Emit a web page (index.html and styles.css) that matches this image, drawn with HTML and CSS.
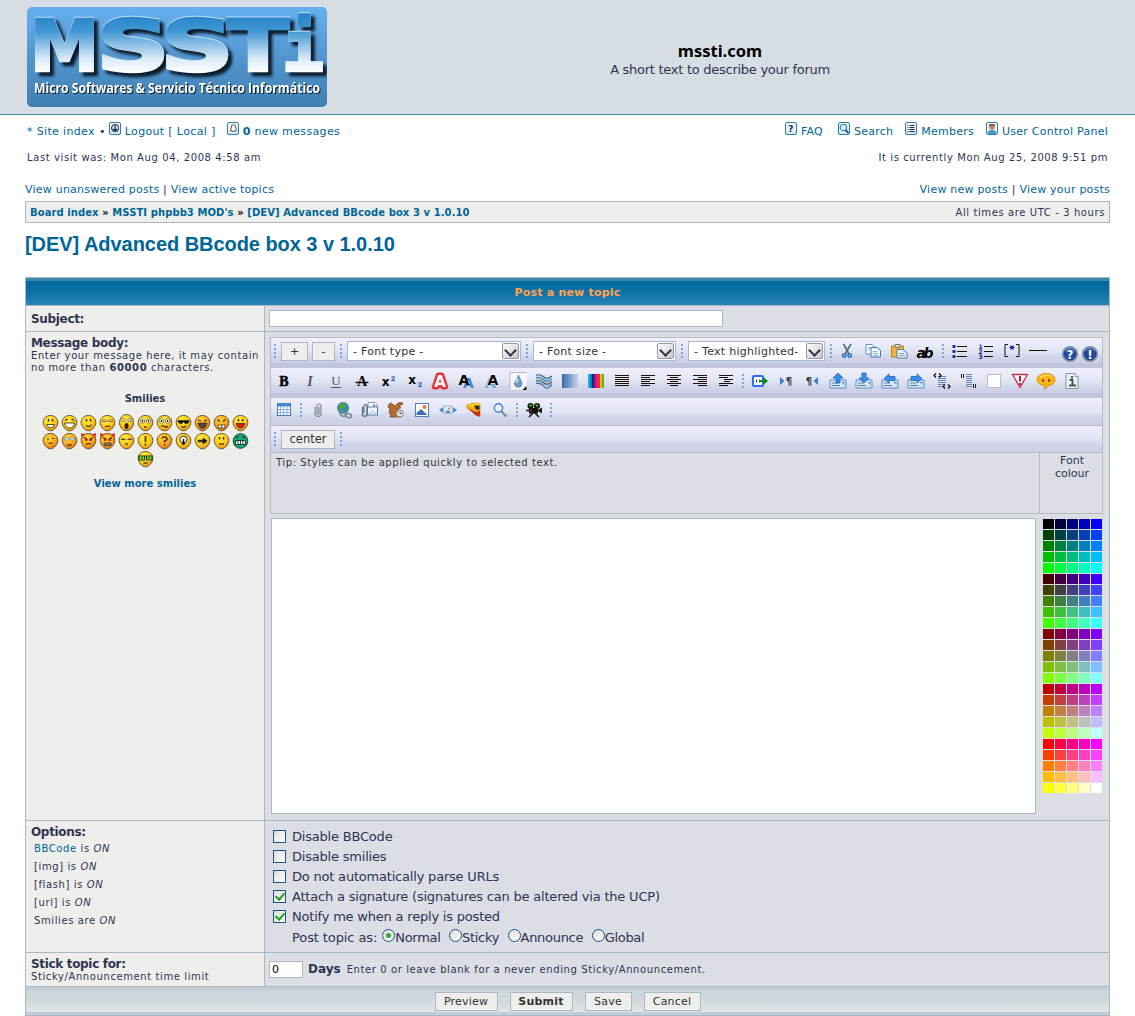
FILE: index.html
```html
<!DOCTYPE html>
<html lang="en">
<head>
<meta charset="utf-8">
<title>mssti.com - Post a new topic</title>
<link rel="stylesheet" href="styles.css">
</head>
<body>
<svg class="defs" width="0" height="0" aria-hidden="true">
  <defs>
    <linearGradient id="gLogo" x1="0" y1="0" x2="0" y2="1"><stop offset="0" stop-color="#66aeee"/><stop offset="1" stop-color="#3f7fb2"/></linearGradient>
    <linearGradient id="gChrome" gradientUnits="userSpaceOnUse" x1="0" y1="10" x2="0" y2="66"><stop offset="0" stop-color="#2a86c8"/><stop offset=".25" stop-color="#3f96d4"/><stop offset=".75" stop-color="#dcebf8"/><stop offset="1" stop-color="#fff"/></linearGradient>
    <radialGradient id="gFace" cx=".4" cy=".3" r=".75"><stop offset="0" stop-color="#fff040"/><stop offset=".6" stop-color="#fdc81c"/><stop offset="1" stop-color="#d98a10"/></radialGradient>
    <radialGradient id="gHot" cx=".4" cy=".3" r=".75"><stop offset="0" stop-color="#ffd83c"/><stop offset=".6" stop-color="#fca61c"/><stop offset="1" stop-color="#cc7010"/></radialGradient>
    <linearGradient id="gBlueFade"><stop offset="0" stop-color="#3a5fb0"/><stop offset=".6" stop-color="#8fb4d4"/><stop offset="1" stop-color="#c8cbe4"/></linearGradient>
    <linearGradient id="gNav" x1="0" y1="0" x2="0" y2="1"><stop offset="0" stop-color="#fff"/><stop offset="1" stop-color="#d2e2ee"/></linearGradient>
  </defs>

  <symbol id="n-box" viewBox="0 0 12 13"><rect x=".5" y=".5" width="11" height="12" rx="1.5" fill="url(#gNav)" stroke="#2f7fa8"/></symbol>
  <symbol id="n-out" viewBox="0 0 12 13"><use href="#n-box"/><circle cx="6" cy="6" r="3.4" fill="none" stroke="#2a4468" stroke-width="1.2"/><path d="M6 3.5v5M4.3 6.8L6 9l1.7-2.2" stroke="#16325c" stroke-width="1.3" fill="none"/></symbol>
  <symbol id="n-pm" viewBox="0 0 12 13"><use href="#n-box"/><path d="M5 3h3l1.500 5-2 1.500-4-1z" fill="#fff" stroke="#666" stroke-width="1.1"/></symbol>
  <symbol id="n-find" viewBox="0 0 12 13"><use href="#n-box"/><circle cx="5.4" cy="5.4" r="3.2" fill="#d8f0ff" stroke="#2a80b4" stroke-width="1.1"/><path d="M7.6 8l2.8 3" stroke="#123a6e" stroke-width="1.8"/></symbol>
  <symbol id="n-list" viewBox="0 0 12 13"><use href="#n-box"/><path d="M2.5 3.5h1m1 0h5M2.5 5.5h1m1 0h5M2.5 7.5h1m1 0h5M2.5 9.5h1m1 0h5" stroke="#222c44"/></symbol>
  <symbol id="n-user" viewBox="0 0 12 13"><use href="#n-box"/><path d="M2 12V9.5L4.5 8h3L10 9.5V12z" fill="#4a9ad0"/><circle cx="6" cy="5" r="2.7" fill="#c8805a"/><path d="M3.2 5V2.2h5.6V5L8 3.6H4z" fill="#5a3826"/></symbol>

  <symbol id="drop" viewBox="-13 -12 26 24"><path d="M-8-8.500H8.500V8.500H-8z" fill="#f6f6fc"/><path d="M-8 8.500V-8.500H8.500" fill="none" stroke="#b8b8b8"/><path d="M.5-6C1-3 4-.5 4 3A3.800 3.800 0 0 1-3.500 3C-3.500 0 0-2 .5-6z" fill="#6a9cc8" stroke="#4a78a4" stroke-width=".8"/><path d="M-1.500 2q0-2 1.500-4" stroke="#e4f4ff" stroke-width="1.400" fill="none"/><path d="M8.500 5v4h-4z" fill="#111"/></symbol>
  <symbol id="waves" viewBox="-13 -12 26 24"><path d="M-8-6q5-1 8 2t8-1v8q-4 4-8 2t-8-3z" fill="#a8cfe4"/><g fill="none" stroke-width="1.200"><path d="M-8-6q5-1 8 2t8-1" stroke="#3a6a88"/><path d="M-8-3q5-1 8 2t8-1" stroke="#2f8fc4"/><path d="M-8 0q5-1 8 2t8-1" stroke="#556"/><path d="M-8 2.500q5-1 8 3t8-2" stroke="#2a7cc0"/><path d="M-2-5q-3 4 1 9M4-2l-1 7" stroke="#e08858" stroke-width=".8"/></g></symbol>
  <symbol id="fade" viewBox="-13 -12 26 24"><path d="M-8-7H8V7H-8z" fill="url(#gBlueFade)"/><path d="M-5.500-7V7M-2.500-7V7M.5-7V7" stroke="#5c88b8" opacity=".6"/></symbol>
  <symbol id="rainbow" viewBox="-13 -12 26 24"><g stroke-width="2"><path d="M-7-7V7" stroke="#18b0e0"/><path d="M-5-7V7" stroke="#0a7cb0"/><path d="M-3-7V7" stroke="#282078"/><path d="M-1-7V7" stroke="#9c1888"/><path d="M1-7V7" stroke="#e8148c"/><path d="M3-7V7" stroke="#f03028"/><path d="M5-7V7" stroke="#f8b818"/><path d="M7-7V7" stroke="#60b020"/></g></symbol>
  <symbol id="just" viewBox="-13 -12 26 24"><path class="ln" d="M-7-5.500H7M-7-3.500H7M-7-1.500H7M-7 .5H7M-7 2.500H7M-7 4.500H7"/></symbol>
  <symbol id="left" viewBox="-13 -12 26 24"><path class="ln" d="M-7-5.500H7M-7-3.500H2M-7-1.500H7M-7 .5H2M-7 2.500H7M-7 4.500H2"/></symbol>
  <symbol id="mid" viewBox="-13 -12 26 24"><path class="ln" d="M-7-5.500H7M-4-3.500H4M-7-1.500H7M-4 .5H4M-7 2.500H7M-4 4.500H4"/></symbol>
  <symbol id="right" viewBox="-13 -12 26 24"><path class="ln" d="M-7-5.500H7M-2-3.500H7M-7-1.500H7M-2 .5H7M-7 2.500H7M-2 4.500H7"/></symbol>
  <symbol id="indent" viewBox="-13 -12 26 24"><path class="ln" d="M-7-5.500H7M-7-3.500H2M-2-1.500H7M-2 .5H4M-7 2.500H7M-7 4.500H2"/></symbol>
  <symbol id="export" viewBox="-13 -12 26 24"><rect x="-7" y="-5" width="10" height="10" rx="1" fill="#fff" stroke="#2f6ef0" stroke-width="2"/><path d="M-3.500-1.500v3M-.5-1.500v3" stroke="#333"/><path d="M-1 0h6" stroke="#0a8a10" stroke-width="2"/><path d="M4-3.500L8 0 4 3.500z" fill="#0a8a10"/></symbol>
  <symbol id="card" viewBox="-13 -12 26 24"><path d="M-8-1H8V7H-8z" fill="#d4e8fa" stroke="#5a8cc0"/><path d="M-6 2H0M-6 4.500H2M4 1.500h2v2" stroke="#5a7c9c" fill="none"/></symbol>
  <symbol id="m-up" viewBox="-13 -12 26 24"><use href="#card" x="-13" y="-12" width="26" height="24"/><path d="M0-8L5-3H2V2h-4V-3h-3z" fill="#3a8cf0" stroke="#1c58b0" stroke-width=".7"/></symbol>
  <symbol id="m-down" viewBox="-13 -12 26 24"><use href="#card" x="-13" y="-12" width="26" height="24"/><path d="M0 2L5-3H2V-8h-4V-3h-3z" fill="#3a8cf0" stroke="#1c58b0" stroke-width=".7"/></symbol>
  <symbol id="m-left" viewBox="-13 -12 26 24"><use href="#card" x="-13" y="-12" width="26" height="24"/><path d="M-6-2.500L-1-7v2.500h6v4h-6V2z" fill="#3a8cf0" stroke="#1c58b0" stroke-width=".7"/></symbol>
  <symbol id="m-right" viewBox="-13 -12 26 24"><use href="#card" x="-13" y="-12" width="26" height="24"/><path d="M6-2.500L1-7v2.500h-6v4h6V2z" fill="#3a8cf0" stroke="#1c58b0" stroke-width=".7"/></symbol>
  <symbol id="code" viewBox="-13 -12 26 24"><path d="M-4-4.500H4M-4-2.500H4M-4-.5H4M-4 1.500H4M-4 3.500H2M-4 5.500H0" stroke="#6c84b4"/><path d="M-6-7.500L-8-5.500-6-3.500M-3-7.500l2 2-2 2M3 3.500L1 5.500 3 7.500M6 3.500L8 5.500 6 7.500" fill="none" stroke="#000" stroke-width="1.100"/></symbol>
  <symbol id="quote" viewBox="-13 -12 26 24"><path d="M-2-6.500H4M-2-4.500H4M-2-2.500H4M-2-.5H4M-2 1.500H4M-2 3.500H4M-2 5.500H4" stroke="#6c84b4"/><path d="M-6.500-7v4M-4.500-7v4M5.500 3v4M7.500 3v4" stroke="#222"/></symbol>
  <symbol id="blank" viewBox="-13 -12 26 24"><rect x="-6.500" y="-6.500" width="13" height="13" fill="#fff" stroke="#bcbcbc"/></symbol>
  <symbol id="warn" viewBox="-13 -12 26 24"><path d="M-7.500-6.500h15L0 6.500z" fill="#fff" stroke="#c83048" stroke-width="1.400" stroke-linejoin="round"/><path d="M0-5V.5M0 2v2" stroke="#c81830" stroke-width="2"/></symbol>
  <symbol id="talk" viewBox="-13 -12 26 24"><path d="M0-7.500c5 0 9 2 9 6S6 4 3 4.500L-1.500 8.500V4.500C-6 4-9 2-9-1.500S-5-7.500 0-7.500z" fill="#fcb414" stroke="#d08810" stroke-width=".8"/><path d="M-6-4q5-3 11-1" stroke="#ffe068" stroke-width="1.500" fill="none"/><path d="M-5-.5L-2-2.500v4zM-2-.5h1M5-.5L2-2.500v4z" fill="#884400"/></symbol>
  <symbol id="info" viewBox="-13 -12 26 24"><path d="M-6-7.500h9l3 3V7.500H-6z" fill="#eef1f4" stroke="#8a949e"/><path d="M3-7.500v3h3" fill="#fff" stroke="#8a949e"/><path d="M0-5v2.500M-2.500-1H.5V4M-3 4.500H4" stroke="#44546a" stroke-width="2" fill="none"/></symbol>

  <symbol id="cut" viewBox="-13 -12 26 24"><path d="M-3.500-7L2 3M4-7L-2 3" stroke="#5c6c80" stroke-width="1.700"/><circle cx="-2.700" cy="4.500" r="1.700" fill="none" stroke="#2a6cb0" stroke-width="1.500"/><circle cx="2.700" cy="4.500" r="1.700" fill="none" stroke="#2a6cb0" stroke-width="1.500"/></symbol>
  <symbol id="copy" viewBox="-13 -12 26 24"><path d="M-7-6.500h6l3 3v6.500h-9z" fill="#fff" stroke="#5a90d0"/><path d="M-2-3.500h6l3.500 3v6.500H-2z" fill="#eef6ff" stroke="#3a78c4"/><path d="M-5-3.500h3M-5-1.500h2M0 .5h4M0 2.500h5M0 4.500h5" stroke="#88b0dc"/></symbol>
  <symbol id="paste" viewBox="-13 -12 26 24"><path d="M-7.500-5h12V6h-12z" fill="#f0b440" stroke="#b8801c"/><path d="M-4-6.500h5v3h-5z" fill="#e0e0e0" stroke="#777"/><path d="M-2-1.500h6L8 2v5H-2z" fill="#e8f2fc" stroke="#5c7c9c"/><path d="M0 2.500h5M0 4.500h6" stroke="#7c9cc0"/></symbol>
  <symbol id="ul" viewBox="-13 -12 26 24"><path class="ln" d="M-3-4.500H7M-3 .5H7M-3 5.500H7"/><path d="M-7.500-4.500h3M-7.500 .5h3M-7.500 5.500h3" stroke="#101080" stroke-width="2.400"/></symbol>
  <symbol id="star" viewBox="-13 -12 26 24"><path d="M-4-6.500h-3V5.500h3M4-6.500h3V5.500H4" fill="none" stroke="#111"/><path d="M-2.500-3.500h5M-1.500-5.500l3 4M1.500-5.500l-3 4" stroke="#1818a0" stroke-width="1.200"/></symbol>
  <symbol id="hr" viewBox="-13 -12 26 24"><path class="ln" d="M-9-.5H9"/></symbol>

  <symbol id="table" viewBox="-13 -12 26 24"><rect x="-6.500" y="-6.500" width="13" height="12" fill="#fff" stroke="#4a7cc0"/><path d="M-6-5H6" stroke="#4a88d8" stroke-width="3"/><path d="M-6-.5H6M-6 2.500H6M-3.500-4V5M-.5-4V5M3-4V5" stroke="#8ab0dc"/></symbol>
  <symbol id="clip" viewBox="-13 -12 26 24"><path d="M-3-3V3.500a3 3 0 0 0 6 0V-4a2 2 0 0 0-4 0V3a1 1 0 0 0 2 0V-3" fill="none" stroke="#7c8894" stroke-width="1.200"/></symbol>
  <symbol id="globe" viewBox="-13 -12 26 24"><circle cx="-1" cy="-2" r="6" fill="#3a80d0"/><path d="M-5-5l4-2.500 3 2-1 3-3 1-1 3-3-2zM2-1l3-2v3l-2 2z" fill="#48a838"/><g fill="none" stroke="#7a8894" stroke-width="1.500"><ellipse cx="-1" cy="4" rx="3.200" ry="2" transform="rotate(15 -1 4)"/><ellipse cx="4.500" cy="5.500" rx="3.200" ry="2" transform="rotate(15 4 5)"/></g></symbol>
  <symbol id="mail" viewBox="-13 -12 26 24"><path d="M-2-3V-7.500H5l2 2v3" fill="#f4f8fc" stroke="#7c9cc0"/><rect x="-2.500" y="-3" width="10" height="8" fill="#eef4fc" stroke="#5080b8"/><path d="M-2 5l4.500-4L7 5" fill="none" stroke="#9ab4d4"/><path d="M4-5.500v2" stroke="#e04830" stroke-width="2"/><path d="M-7.500-3V4a2 2 0 0 0 4.500 0V-4a1.500 1.500 0 0 0-3 0V3" fill="none" stroke="#56687c" stroke-width="1.200"/></symbol>
  <symbol id="squirrel" viewBox="-13 -12 26 24"><path d="M-7-6l2-1 2 1.500L-1-4l3-3 4-.5 1 1.500-4 2 2 1.500-3 1.500 1 5 2 3H-6l1-2-2-2 1-4-2-2z" fill="#b06a30" stroke="#70401c" stroke-width=".7"/><circle cx="4" cy="3.500" r="3.500" fill="#dce4ea" stroke="#8a8a8a"/><path d="M4 1.500v2h2" stroke="#555" fill="none"/></symbol>
  <symbol id="image" viewBox="-13 -12 26 24"><rect x="-6.500" y="-6.500" width="13" height="13" fill="#fff" stroke="#5080c0"/><path d="M-5.500 5V3l4.500-4 6.500 6z" fill="#3c70b8"/><circle cx="2.500" cy="-3" r="2" fill="#e87838"/></symbol>
  <symbol id="slides" viewBox="-13 -12 26 24"><rect x="-4" y="-4" width="8" height="8" fill="#dce8f4" stroke="#a8b8c8"/><path d="M-3 3l3-3 3 3z" fill="#4a80bc"/><circle cx="1" cy="-1.500" r="1" fill="#d87848"/><path d="M-5-3v6l-4-3zM5-3v6l4-3z" fill="#5088d0"/></symbol>
  <symbol id="bird" viewBox="-13 -12 26 24"><path d="M-7-5Q0-8 6-6.500V6.500Q1 6-1 2L-7-2z" fill="#f4a818" stroke="#b87c14" stroke-width=".7"/><path d="M-7-5q4 3 13 2v-3.500q-7-1-13 1.500z" fill="#ffd028"/><path d="M0-4.500h5.500v4H2z" fill="#2c2416"/><path d="M-6-1.500L2 2l4-1.500V6.500Q1 6-2 2z" fill="#c03818"/></symbol>
  <symbol id="loupe" viewBox="-13 -12 26 24"><circle cx="-1.500" cy="-2" r="4.200" fill="#e4f2fc" stroke="#4a84cc" stroke-width="1.400"/><path d="M1.500 1.500l5 5" stroke="#7a8a9c" stroke-width="2"/></symbol>
  <symbol id="camera" viewBox="-13 -12 26 24"><circle cx="-3.500" cy="-4" r="3" fill="#111"/><circle cx="3" cy="-4" r="3" fill="#111"/><circle cx="-3.500" cy="-4.500" r="1.200" fill="#28d820"/><circle cx="3" cy="-4.500" r="1.200" fill="#28d820"/><path d="M-5-2H4V3.500h-9zM4 0l4-2.500v6L4 1z" fill="#111"/><path d="M-1 3l-4 4M1 3l4 4M-8 .5h4" stroke="#111" stroke-width="1.500"/><path d="M-4 .5h2" stroke="#d02020" stroke-width="1.500"/></symbol>

  <symbol id="face" viewBox="0 0 19 18"><path d="M9.500 1.500C13.800 1.500 16.800 4.500 16.800 8.300S13.300 16.800 9.500 16.800 2.200 12.200 2.200 8.300 5.200 1.500 9.500 1.500z" fill="url(#gFace)" stroke="#6b5226"/></symbol>
  <symbol id="facehot" viewBox="0 0 19 18"><path d="M9.500 1.500C13.800 1.500 16.800 4.500 16.800 8.300S13.300 16.800 9.500 16.800 2.200 12.200 2.200 8.300 5.200 1.500 9.500 1.500z" fill="url(#gHot)" stroke="#6b5226"/></symbol>
  <symbol id="devil" viewBox="0 0 19 18"><use href="#facehot"/><path d="M2 1l4.500 1.500L2.500 6zM17 1l-4.500 1.500 4 3.500z" fill="#d83018"/><path d="M5 5.500l3.500 2M14 5.500l-3.500 2" stroke="#402000" stroke-width="1.200"/><path d="M6 8h2.500M10.500 8H13" stroke="#c01010" stroke-width="1.600"/></symbol>
</svg>

<header class="masthead">
  <svg class="logo" width="300" height="100" viewBox="0 0 300 100" role="img" aria-label="MSSTi">
    <rect width="300" height="100" rx="5" fill="url(#gLogo)"/>
    <g class="logo-word">
      <text class="w1" x="3" y="64" textLength="69" lengthAdjust="spacingAndGlyphs">M</text>
      <text class="w1" x="69" y="64" textLength="74" lengthAdjust="spacingAndGlyphs">S</text>
      <text class="w1" x="133" y="64" textLength="74" lengthAdjust="spacingAndGlyphs">S</text>
      <text class="w1" x="200" y="64" textLength="62" lengthAdjust="spacingAndGlyphs">T</text>
      <text class="w2" x="255" y="64" textLength="42" lengthAdjust="spacingAndGlyphs">i</text>
    </g>
    <text class="logo-tag" x="7" y="86" textLength="286" lengthAdjust="spacingAndGlyphs">Micro Softwares &amp; Servicio Técnico Informático</text>
  </svg>
  <div class="site">
    <h1>mssti.com</h1>
    <p>A short text to describe your forum</p>
  </div>
</header>

<nav class="menu">
  <div class="menu-side">
    <a>* Site index</a><span class="dot">•</span><a><svg class="nav-ico"><use href="#n-out"/></svg>Logout [ Local ]</a>
    <a class="pm"><svg class="nav-ico"><use href="#n-pm"/></svg><b>0</b> new messages</a>
  </div>
  <div class="menu-side tools">
    <a class="faq"><svg class="nav-ico" viewBox="0 0 12 13"><use href="#n-box"/><text x="6" y="10" text-anchor="middle" font-size="9.5" font-weight="bold" fill="#123a6e">?</text></svg>FAQ</a>
    <a><svg class="nav-ico"><use href="#n-find"/></svg>Search</a>
    <a><svg class="nav-ico"><use href="#n-list"/></svg>Members</a>
    <a><svg class="nav-ico"><use href="#n-user"/></svg>User Control Panel</a>
  </div>
</nav>
<div class="dates small"><span>Last visit was: Mon Aug 04, 2008 4:58 am</span><span>It is currently Mon Aug 25, 2008 9:51 pm</span></div>

<main>
  <div class="views"><span><a>View unanswered posts</a> | <a>View active topics</a></span><span><a>View new posts</a> | <a>View your posts</a></span></div>
  <div class="crumbs"><span class="path"><a>Board index</a> » <a>MSSTI phpbb3 MOD's</a> » <a>[DEV] Advanced BBcode box 3 v 1.0.10</a></span><span class="small">All times are UTC - 3 hours</span></div>
  <h2 class="topic">[DEV] Advanced BBcode box 3 v 1.0.10</h2>

  <form class="post">
    <div class="head">Post a new topic</div>

    <div class="label subj"><b class="name">Subject:</b></div>
    <div class="field"><input class="subject" type="text"></div>

    <div class="label body-label">
      <b class="name">Message body:</b>
      <p class="small hint">Enter your message here, it may contain<br>no more than <b>60000</b> characters.</p>
      <b class="smile-title">Smilies</b>
      <div class="smilies" id="smilies"></div>
      <a class="more">View more smilies</a>
    </div>
    <div class="field editor">
      <div class="toolbar">
        <div class="bar">
          <i class="sep"></i><span class="btn plus">+</span><span class="btn minus">-</span><i class="sep"></i>
          <span class="sel s1">- Font type -<i></i></span><i class="sep"></i>
          <span class="sel s2">- Font size -<i></i></span><i class="sep"></i>
          <span class="sel s3">- Text highlighted-<i></i></span><i class="sep"></i>
          <span class="group first"><svg class="ico"><use href="#cut"/></svg><svg class="ico"><use href="#copy"/></svg><svg class="ico"><use href="#paste"/></svg><svg class="ico" viewBox="-13 -12 26 24"><text class="sb it" x="0" y="7" font-size="14" textLength="17">ab</text></svg></span><i class="sep"></i>
          <span class="group"><svg class="ico"><use href="#ul"/></svg><svg class="ico" viewBox="-13 -12 26 24"><path class="ln" d="M-2-4.500H7M-2 .5H7M-2 5.500H7"/><g fill="#101080" font-size="6" font-weight="bold"><text x="-7.500" y="-2.500">1</text><text x="-7.500" y="2.500">2</text><text x="-7.500" y="7.500">3</text></g></svg><svg class="ico"><use href="#star"/></svg><svg class="ico"><use href="#hr"/></svg></span>
          <span class="group helps"><svg class="ico" viewBox="-10 -12 20 24"><circle r="7.300" fill="#1f479c" stroke="#8b93a8" stroke-width="1.600"/><path d="M-5-3a6 6 0 0 1 10 0" stroke="#7aa0e0" fill="none"/><text class="sb" y="4.500" font-size="12" fill="#fff">?</text></svg><svg class="ico" viewBox="-10 -12 20 24"><circle r="7.300" fill="#1f479c" stroke="#8b93a8" stroke-width="1.600"/><path d="M-5-3a6 6 0 0 1 10 0" stroke="#7aa0e0" fill="none"/><text class="sb" y="4.500" font-size="12" fill="#fff">!</text></svg></span>
        </div>
        <div class="bar">
          <svg class="ico" viewBox="-13 -12 26 24"><text class="sf" x="0" y="5" font-size="14" stroke="#000" stroke-width=".5">B</text></svg><svg class="ico" viewBox="-13 -12 26 24"><text class="sf it" x="0" y="5" font-size="14" fill="#555">I</text></svg><svg class="ico" viewBox="-13 -12 26 24"><text class="sf un" x="0" y="4" font-size="13">U</text><path d="M-5 6.500H5" stroke="#555"/></svg><svg class="ico" viewBox="-13 -12 26 24"><text class="sf" x="0" y="5" font-size="14">A</text><path d="M-6.500 1.500h13" stroke="#000" stroke-width="1.400"/></svg><svg class="ico" viewBox="-13 -12 26 24"><text class="sb" x="-2.500" y="5" font-size="12">x</text><text class="sb" x="5" y="0" font-size="6.500" fill="#2a50b8">2</text></svg><svg class="ico" viewBox="-13 -12 26 24"><text class="sb" x="-2" y="3" font-size="12">x</text><text class="sb" x="6" y="6" font-size="6.500" fill="#2a50b8">2</text></svg><svg class="ico" viewBox="-13 -12 26 24"><text class="sb" x="0" y="5.500" font-size="15" fill="#fff" stroke="#e0303a" stroke-width="5" stroke-linejoin="round" paint-order="stroke">A</text></svg><svg class="ico" viewBox="-13 -12 26 24"><text class="sb" x="2.500" y="7" font-size="14" fill="#3d80c4">A</text><text class="sb" x="-2" y="3.500" font-size="14">A</text></svg><svg class="ico" viewBox="-13 -12 26 24"><text class="sb" x="-1.500" y="6.500" font-size="14" fill="#6aa4d4">A</text><text class="sb" x="1" y="4" font-size="14" stroke="#fff" paint-order="stroke">A</text></svg><svg class="ico"><use href="#drop"/></svg><svg class="ico"><use href="#waves"/></svg><svg class="ico"><use href="#fade"/></svg><svg class="ico"><use href="#rainbow"/></svg><svg class="ico"><use href="#just"/></svg><svg class="ico"><use href="#left"/></svg><svg class="ico"><use href="#mid"/></svg><svg class="ico"><use href="#right"/></svg><svg class="ico"><use href="#indent"/></svg><i class="sep"></i><svg class="ico"><use href="#export"/></svg><svg class="ico" viewBox="-13 -12 26 24"><path d="M-6-4v8L-1.500 0z" fill="#3a7cd0"/><text class="sb" x="3" y="4" font-size="10" fill="#333">¶</text></svg><svg class="ico" viewBox="-13 -12 26 24"><path d="M6-4v8L1.500 0z" fill="#3a7cd0"/><text class="sb" x="-3" y="4" font-size="10" fill="#333">¶</text></svg><svg class="ico"><use href="#m-up"/></svg><svg class="ico"><use href="#m-down"/></svg><svg class="ico"><use href="#m-left"/></svg><svg class="ico"><use href="#m-right"/></svg><svg class="ico"><use href="#code"/></svg><svg class="ico"><use href="#quote"/></svg><svg class="ico"><use href="#blank"/></svg><svg class="ico"><use href="#warn"/></svg><svg class="ico"><use href="#talk"/></svg><svg class="ico"><use href="#info"/></svg>
        </div>
        <div class="bar third">
          <svg class="ico"><use href="#table"/></svg><i class="sep"></i><svg class="ico"><use href="#clip"/></svg><svg class="ico"><use href="#globe"/></svg><svg class="ico"><use href="#mail"/></svg><svg class="ico"><use href="#squirrel"/></svg><svg class="ico"><use href="#image"/></svg><svg class="ico"><use href="#slides"/></svg><svg class="ico"><use href="#bird"/></svg><svg class="ico"><use href="#loupe"/></svg><i class="sep"></i><svg class="ico"><use href="#camera"/></svg><i class="sep"></i>
        </div>
        <div class="bar fourth"><i class="sep"></i><span class="btn center">center</span><i class="sep"></i></div>
        <div class="tips"><div class="tip small">Tip: Styles can be applied quickly to selected text.</div><div class="fc">Font<br>colour</div></div>
      </div>
      <div class="compose"><textarea></textarea><div class="palette" id="palette"></div></div>
    </div>

    <div class="label opts">
      <b class="name">Options:</b>
      <ul class="small"><li><a>BBCode</a> is <em>ON</em></li><li>[img] is <em>ON</em></li><li>[flash] is <em>ON</em></li><li>[url] is <em>ON</em></li><li>Smilies are <em>ON</em></li></ul>
    </div>
    <div class="field checks">
      <label><input type="checkbox">Disable BBCode</label>
      <label><input type="checkbox">Disable smilies</label>
      <label><input type="checkbox">Do not automatically parse URLs</label>
      <label><input type="checkbox" checked>Attach a signature (signatures can be altered via the UCP)</label>
      <label><input type="checkbox" checked>Notify me when a reply is posted</label>
      <div class="types"><span class="as">Post topic as:</span><label><input type="radio" name="t" checked>Normal</label><label><input type="radio" name="t">Sticky</label><label><input type="radio" name="t">Announce</label><label><input type="radio" name="t">Global</label></div>
    </div>

    <div class="label stick"><b class="name">Stick topic for:</b><p class="small">Sticky/Announcement time limit</p></div>
    <div class="field days"><input class="num" type="text" value="0"><b>Days</b><span class="small">Enter 0 or leave blank for a never ending Sticky/Announcement.</span></div>

    <div class="foot"><span class="btn b1">Preview</span><span class="btn b2">Submit</span><span class="btn b3">Save</span><span class="btn b4">Cancel</span></div>
  </form>
</main>
<script src="script.js"></script>
</body>
</html>
```
FILE: styles.css
```css
* { box-sizing: border-box; }
body { margin: 0; background: #fff; color: #2e3450; font: 11px/13px Verdana, "DejaVu Sans", sans-serif; height: 1016px; overflow: hidden; }
h1, h2, p, ul { margin: 0; padding: 0; }
a { color: #006597; }
.defs { position: absolute; }
.small { font-size: 10px; letter-spacing: .6px; }

.masthead { height: 115px; background: #d6dde3; border-bottom: 1px solid #4787a7; display: flex; padding: 7px 27px 0; }
.logo { flex: none; }
.logo-word { fill: url(#gChrome); stroke: url(#gChrome); stroke-width: 2.5; filter: drop-shadow(0 -.7px 0 #c4e2fa) drop-shadow(4px 4px 1.5px #0b1c2c); }
.w1 { font: bold 72px "DejaVu Sans", sans-serif; }
.w2 { font: bold 70px "DejaVu Sans Mono", monospace; }
.logo-tag { font: bold 14.5px "Open Sans", "Noto Sans", sans-serif; fill: #fff; filter: drop-shadow(1.5px 1.5px .6px #102030); }
.site { flex: 1; text-align: center; padding: 34px 0 0 5px; }
.site h1 { font: bold 16.5px/20px "Noto Sans", "Open Sans", sans-serif; color: #000; }
.site p { font-size: 13px; line-height: 17px; letter-spacing: -.27px; }

.menu { display: flex; justify-content: space-between; height: 33px; padding: 7px 27px 0; }
.menu-side { display: flex; height: 20px; line-height: 20px; white-space: nowrap; letter-spacing: .35px; }
.menu-side a { white-space: pre; }
.dot { margin: 0 3px 0 4px; }
.nav-ico { width: 12px; height: 13px; margin: 0 4px 0 0; vertical-align: 0; }
.pm { margin-left: 11px; }
.tools { gap: 12px; letter-spacing: .25px; }
.faq { margin-right: 3px; }
.dates { display: flex; justify-content: space-between; height: 35px; line-height: 20px; padding: 0 27px; }

main { padding: 0 25px; }
.views { display: flex; justify-content: space-between; height: 18px; line-height: 13px; letter-spacing: .22px; }
.crumbs { display: flex; justify-content: space-between; align-items: center; height: 22px; border: 1px solid #a9b8c2; background: #eeefed; padding: 0 4px; }
.path { font-size: 10px; font-weight: bold; color: #000; letter-spacing: .08px; }
.topic { height: 54px; padding-top: 9px; font: bold 20px/24px "Liberation Sans", Arial, sans-serif; letter-spacing: -.05px; color: #006597; }

.post { width: 1085px; display: grid; grid-template-columns: 238px 844px; grid-template-rows: 27px 25px 488px 131px 33px 28px; gap: 1px; padding: 1px; background: #a9b8c2; }
.head { grid-column: 1 / 3; background: linear-gradient(#3a88ae 0 3px, #00679c 3px, #1172a6 55%, #2784b6); color: #ffa34f; font-weight: bold; text-align: center; line-height: 29px; letter-spacing: .2px; }
.label { background: #eeefed; padding: 6px 5px 0; }
.subj { padding-top: 7px; }
.field { background: #dcdee6; }
.name { display: block; font-size: 12px; line-height: 13px; letter-spacing: -.33px; }
.subject { display: block; width: 454px; height: 17px; margin: 4px 0 0 4px; border: 1px solid #a9b8c2; background: #fff; }
.body-label { padding-top: 5px; display: flex; flex-direction: column; }
.hint { line-height: 12px; white-space: nowrap; }
.smile-title { text-align: center; font-size: 10px; margin-top: 18px; }
.smilies { display: flex; flex-wrap: wrap; justify-content: center; width: 209px; margin: 9px 0 0 10px; }
.smilies svg { width: 19px; height: 18px; display: block; }
.more { text-align: center; font-size: 10px; font-weight: bold; margin-top: 9px; }

.editor { padding: 5px 0 0 5px; }
.toolbar { width: 833px; border: 1px solid #b9b9bd; }
.bar { display: flex; align-items: center; height: 30px; padding-bottom: 4px; background: linear-gradient(#f0effe, #e6eaf6 8px, #dfe3f1 14px, #d3d7ea 18px, #cccee4 25px, #c2c3dc 25px); }
.third { height: 27px; padding-bottom: 3px; background: linear-gradient(#f0effe, #e2e5f3 14px, #d3d7ea 18px, #cccee4); }
.fourth { height: 27px; padding: 0; border-top: 1px solid #b9b9bd; background: linear-gradient(#f0effe, #e2e5f3 12px, #d3d7ea 18px, #cccee4); }
.ico { width: 26px; height: 24px; flex: none; display: block; }
.group { display: flex; }
.first { margin-left: -1px; margin-right: 1px; }
.helps { margin: 5px 0 0 9px; }
.helps .ico { width: 20px; }
.sep { width: 8px; height: 14px; flex: none; background: repeating-linear-gradient(#7ea2e8 0 2px, transparent 2px 4px) 3px 0 / 2px 14px no-repeat; }
.btn { display: inline-block; flex: none; height: 19px; line-height: 17px; border: 1px solid #a9b8c2; background: #eeefed; color: #333; text-align: center; font-size: 11px; }
.plus { width: 27px; margin: 0 4px 0 2px; }
.minus { width: 23px; margin-right: 2px; }
.center { width: 54px; margin: 0 2px; font-size: 11.5px; }
.sel { display: flex; justify-content: space-between; height: 20px; margin: 0 2px; flex: none; border: 1px solid #a9b8c2; background: #fff; padding: 1px 1px 1px 5px; color: #333; line-height: 17px; white-space: nowrap; letter-spacing: .28px; }
.sel i { width: 17px; height: 16px; border: 1px solid #8f98a8; border-radius: 2px; background: linear-gradient(135deg, #fff, #c4c8d4); display: flex; justify-content: center; padding-top: 3px; }
.sel i::after { content: ""; width: 7px; height: 7px; border: solid #333; border-width: 0 2px 2px 0; transform: translateY(-1px) rotate(45deg); }
.s1 { width: 174px; }
.s2 { width: 143px; }
.s3 { width: 137px; }
.tips { display: flex; height: 61px; border-top: 1px solid #b9b9bd; color: #333; }
.tip { flex: 1; padding: 3px 5px; letter-spacing: .57px; }
.fc { width: 63px; border-left: 1px solid #b9b9bd; text-align: center; padding-top: 1px; padding-left: 2px; color: #2e3450; }
.compose { display: flex; padding: 4px 0 0 1px; }
textarea { width: 765px; height: 296px; border: 1px solid #a9b8c2; background: #fff; resize: none; margin: 0; }
.palette { display: grid; grid-template-columns: repeat(5, 11px); grid-auto-rows: 10px; gap: 1px; margin: 1px 0 0 7px; align-content: start; }

.sf { font-family: "Liberation Serif", serif; font-weight: bold; text-anchor: middle; }
.sb { font-family: "DejaVu Sans", sans-serif; font-weight: bold; text-anchor: middle; }
.it { font-style: italic; }
.un { fill: #555; font-weight: normal; }
.ln { stroke: #1c1008; stroke-width: 1; fill: none; }

.opts { padding-top: 5px; }
.opts ul { list-style: none; padding: 1px 0 0 3px; line-height: 18px; }
.checks { padding: 5px 0 0 8px; font-size: 13px; letter-spacing: -.2px; }
.checks > label { display: flex; align-items: center; height: 20px; }
input[type="checkbox"], input[type="radio"] { appearance: none; flex: none; width: 13px; height: 13px; margin: 0 6px 0 0; border: 1px solid #1c5180; background: linear-gradient(135deg, #dcdcd7, #fff); display: flex; justify-content: center; align-items: center; }
input[type="checkbox"]:checked::after { content: ""; width: 4px; height: 7px; border: solid #21a121; border-width: 0 2px 2px 0; transform: translateY(-1px) rotate(40deg); }
input[type="radio"] { border-radius: 50%; margin: 0 0 3px; }
input[type="radio"]:checked::after { content: ""; width: 5px; height: 5px; border-radius: 50%; background: #2cab2c; }
.types { display: flex; align-items: center; height: 22px; padding-left: 19px; letter-spacing: -.3px; }
.types label { display: flex; align-items: center; margin-right: 8.5px; }
.as { margin-right: 5px; letter-spacing: -.1px; }
.stick { padding-top: 5px; }
.stick p { line-height: 12px; }
.days { display: flex; align-items: center; padding-left: 4px; }
.num { width: 34px; height: 17px; border: 1px solid #a9b8c2; padding: 0 2px; font: 11px "DejaVu Sans", sans-serif; margin: 0 5px 0 0; }
.days b { font-size: 12px; margin-right: 6px; }
.foot { grid-column: 1 / 3; display: flex; justify-content: center; align-items: center; gap: 12px; padding-top: 1px; background: linear-gradient(#c3cdd8 0 3px, #ccd7da 4px, #d0d8dd 12px, #dae0e4 20px, #e0e5e8 25px, #c3cdd8 25px); }
.foot .btn { font-size: 11px; letter-spacing: .2px; }
.b1 { width: 63px; }
.b2 { width: 63px; font-weight: bold; }
.b3 { width: 47px; }
.b4 { width: 57px; }
```
FILE: script.js
```js
// Colour palette: every combination of five levels per channel.
var levels = ['00', '40', '80', 'BF', 'FF'];
var cells = '';
levels.forEach(function (r) {
  levels.forEach(function (g) {
    levels.forEach(function (b) {
      cells += '<span style="background:#' + r + g + b + '"></span>';
    });
  });
});
document.getElementById('palette').innerHTML = cells;

// Smilies: a base face plus the features that set each one apart.
function p(d, stroke, width, fill) {
  return '<path d="' + d + '" stroke="' + (stroke || '#3a2800') + '" stroke-width="' + (width || 1.2) + '" fill="' + (fill || 'none') + '"/>';
}
var eyes = p('M7.500 5v2.500M11.500 5v2.500', '#3a2800', 1.5);
var round = '<g fill="#fff" stroke="#7a6a50" stroke-width=".8"><circle cx="6.500" cy="7" r="2.300"/><circle cx="12.500" cy="7" r="2.300"/></g>' + p('M6.500 6v2M12.500 6v2', '#111', 1.3);
var faces = [
  ['face', eyes + p('M5.500 10.500h8q-1 3.500-4 3.500t-4-3.500z', '#3a2800', .8, '#fff')],
  ['face', p('M5 6.500l2.500-1.500M14 6.500l-2.500-1.500') + p('M4.500 9h10q-1 5-5 5t-5-5z', '#3a2800', .8, '#fff')],
  ['face', eyes + p('M7 11.500q4 2 5.500-1')],
  ['face', p('M4.500 7.500h4v-1.500h-4zM10.500 7.500h4v-1.500h-4z', '#8a6a30', .9, '#fff') + p('M7 13q2.500-2 5 0')],
  ['tall', p('M5 5h3v2.500H5zM11 5h3v2.500h-3z', '#7a6a50', .8, '#fff') + '<ellipse cx="9.500" cy="12" rx="2" ry="3" fill="#401800"/>'],
  ['face', round + p('M8 13h3')],
  ['face', round + p('M6 12.500q2-1.500 3.500 0t3.500-.5')],
  ['face', p('M4 6.500h11v1.500l-2 1.500h-2L9.500 7.500 8 9.500H6L4 8z', '#111', .5, '#111') + p('M7 12.500q3 1.500 5-.5')],
  ['facehot', p('M5 6l3 1M14 6l-3 1') + p('M5 9h9q-1 5.500-4.500 5.500T5 9z', '#503018', .8, '#554438')],
  ['facehot', p('M5.500 5.500l2.500 2M13.500 5.500l-2.500 2') + p('M6 11h7v3H6zM9.500 11v3', '#503018', .8, '#fff')],
  ['face', eyes + p('M5 9.500h9q-1 4.500-4.500 4.500T5 9.500z', '#601808', .8, '#d82018')],
  ['facehot', p('M6 7h2M11 6.500h2') + p('M7.500 11.500q2-1 4 0')],
  ['facehot', p('M4.500 8h4v-2h-4zM10.500 8h4v-2h-4z', '#8090a0', .9, '#fff') + p('M7 13h5')],
  ['devil', p('M7 12.500q2.500-2 5 0')],
  ['devil', p('M6 11h7v2.500H6z', '#503018', .8, '#777')],
  ['face', p('M4 7.500q2.500-2 4.500 0zM10.500 7.500q2-2 4.500 0z', '#5a4420', .9, '#fff') + p('M8 12h3')],
  ['face', p('M9.500 4v6M9.500 11.500v2', '#4a3400', 1.7)],
  ['facehot', p('M7 6.500q.5-1.500 2.500-1.500t2.500 1.500-2.500 2.500v1.500M9.500 12v1.500', '#4a3400', 1.5)],
  ['face', '<circle cx="9.500" cy="7.500" r="3.500" fill="#fff" stroke="#333"/>' + p('M9.500 7v6M8 11.500h3', '#111', 1.6)],
  ['face', p('M5 8.200h5V6l4 3-4 3V9.800H5z', '#111', .6, '#111')],
  ['face', eyes + p('M7 12h5')],
  ['green', ''],
  ['face', p('M2 6h15M3 6h5.500v4H3zM10.500 6H16v4h-5.500z', '#183c08', 1.1, '#9ce838') + p('M6 7v2M13 7v2M7.500 13h4', '#111', 1)]
];
document.getElementById('smilies').innerHTML = faces.map(function (f) {
  if (f[0] === 'green') {
    return '<svg viewBox="0 0 19 18"><circle cx="9.500" cy="9" r="7.300" fill="#18a878" stroke="#0a5038"/>' + p('M5 6l2.500-1.500M14 6l-2.500-1.500') + p('M4.500 8.500h10v4h-10zM7 8.500v4M9.500 8.500v4M12 8.500v4', '#063020', .9, '#fff') + '</svg>';
  }
  if (f[0] === 'tall') {
    return '<svg viewBox="0 0 19 18"><ellipse cx="9.500" cy="8.600" rx="7" ry="8.100" fill="url(#gFace)" stroke="#6b5226"/>' + f[1] + '</svg>';
  }
  return '<svg viewBox="0 0 19 18"><use href="#' + f[0] + '"/>' + f[1] + '</svg>';
}).join('');
```
